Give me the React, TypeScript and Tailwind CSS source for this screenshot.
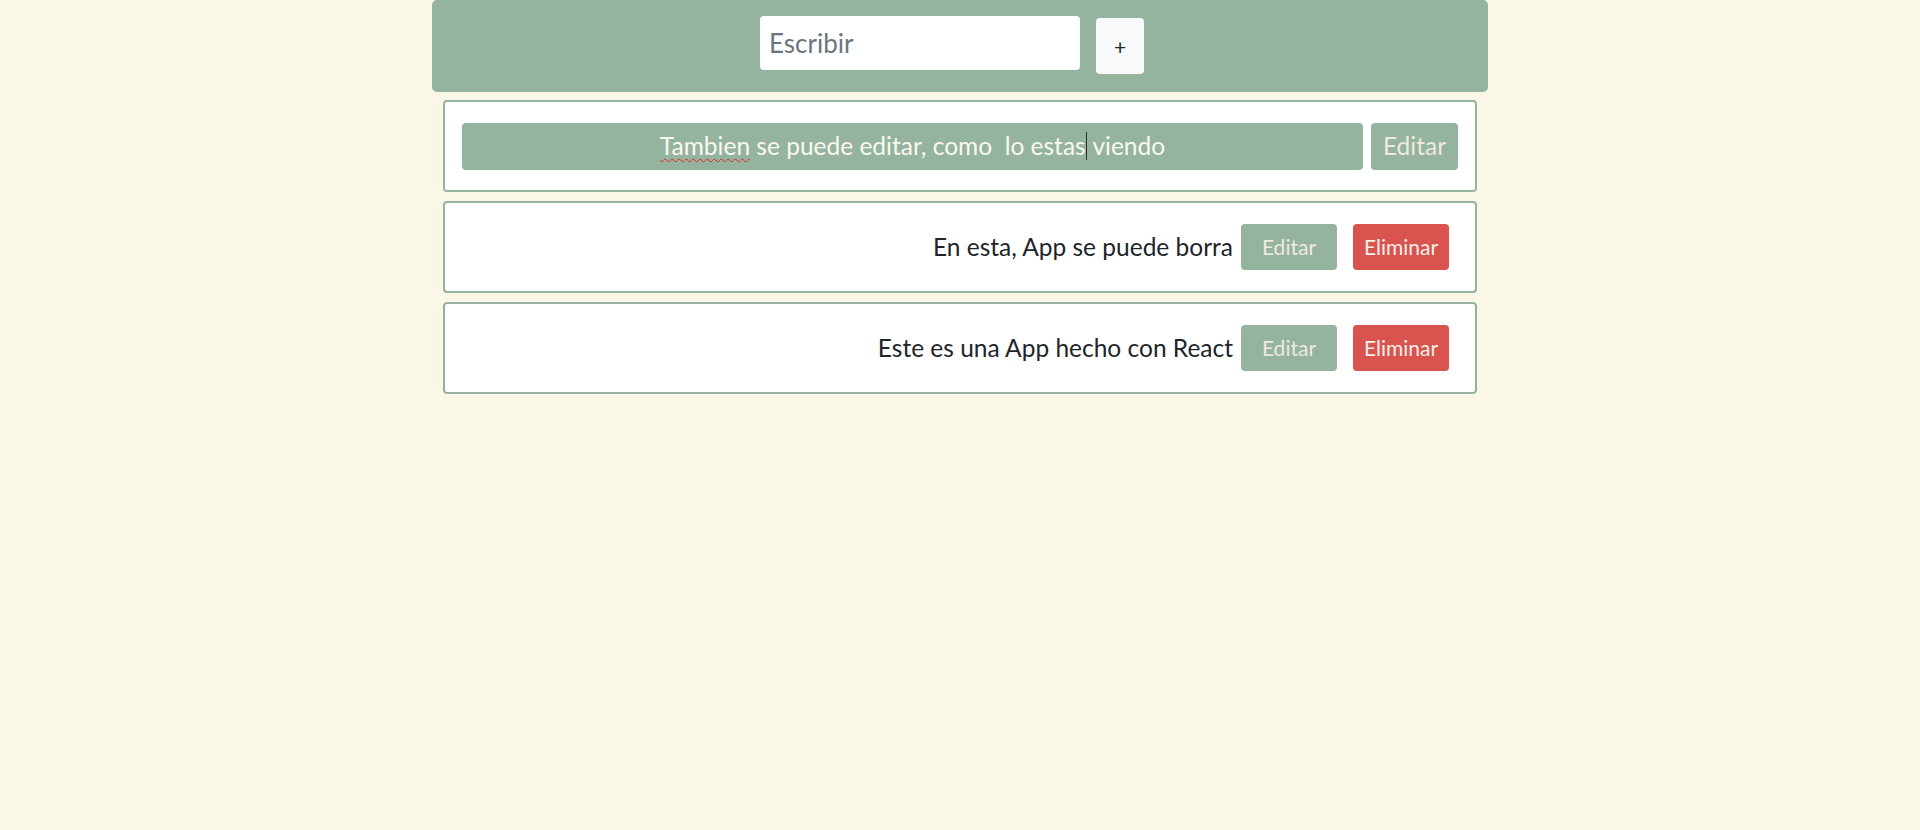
import { useState } from 'react';

type Tarea = { id: number; texto: string };

const tareas: Tarea[] = [
  { id: 2, texto: 'En esta, App se puede borra' },
  { id: 3, texto: 'Este es una App hecho con React' },
];

export default function App() {
  const [nueva, setNueva] = useState('');

  return (
    <div className="min-h-[830px] w-full bg-[#faf7e7] font-['Lato','Open_Sans',sans-serif] text-[#212529]">
      {/* Header con formulario */}
      <header className="mx-auto flex h-[92px] w-[1056px] justify-center rounded-[5px] bg-[#95b4a0] pt-4">
        <input
          value={nueva}
          onChange={(e) => setNueva(e.target.value)}
          placeholder="Escribir"
          className="h-[54px] w-[320px] rounded-[4px] bg-white px-[9px] text-[26px] text-[#495057] outline-none placeholder:text-[#6c757d]"
        />
        <button className="ml-4 mr-4 mt-[2px] h-[56px] w-[48px] rounded-[4px] bg-[#f8f9fa] text-[21px] leading-none text-[#212529]">
          +
        </button>
      </header>

      <ul className="mx-auto w-[1034px]">
        {/* Tarea en edicion */}
        <li className="mt-2 flex h-[92px] items-center gap-2 rounded-[4px] border-2 border-[#95b4a0] bg-white px-[17px]">
          <div className="flex h-[47px] flex-1 items-center justify-center whitespace-pre rounded-[4px] bg-[#95b4a0] text-[24.5px] text-[#fbf8ef]">
            <span className="underline decoration-[#e0262b] decoration-wavy decoration-1 underline-offset-[3px]">Tambien</span>
            <span> se puede editar, como  lo estas</span>
            <span className="inline-block h-[28px] w-px bg-[#2b2b2b]" />
            <span> viendo</span>
          </div>
          <button className="h-[47px] w-[87px] rounded-[4px] bg-[#95b4a0] text-[24.5px] text-[#efe9df]">Editar</button>
        </li>

        {tareas.map((t) => (
          <li
            key={t.id}
            className="mt-[9px] flex h-[92px] items-center justify-end rounded-[4px] border-2 border-[#95b4a0] bg-white pr-[26px] text-[24.5px]"
          >
            <span className="mr-2">{t.texto}</span>
            <button className="h-[46px] w-[96px] rounded-[4px] bg-[#95b4a0] text-[21px] text-[#efe9df]">Editar</button>
            <button className="ml-4 h-[46px] w-[96px] rounded-[4px] bg-[#d9534f] text-[21px] text-[#f7efe8]">Eliminar</button>
          </li>
        ))}
      </ul>
    </div>
  );
}
